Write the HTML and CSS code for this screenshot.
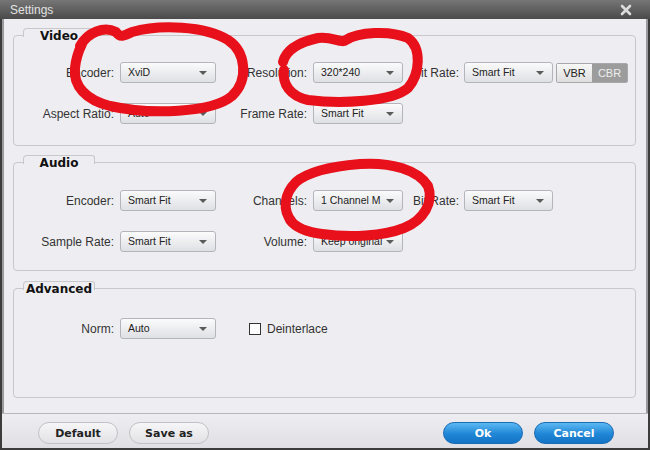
FILE: index.html
```html
<!DOCTYPE html>
<html lang="en">
<head>
  <meta charset="UTF-8" />
  <title>Settings</title>
  <link rel="stylesheet" href="styles.css">
</head>
<body>
  <div class="window">
    <div class="titlebar">
      <span class="title">Settings</span>
      <svg class="close" width="12" height="12" viewBox="0 0 12 12">
        <path d="M2 2 L10 10 M10 2 L2 10" stroke="#dcdcdc" stroke-width="2.6" stroke-linecap="round" />
      </svg>
    </div>

    <div class="content">
      <div class="group video">
        <div class="tab">Video</div>
        <div class="row">
          <label>Encoder:</label>
          <div class="select">XviD</div>
          <label>Resolution:</label>
          <div class="select">320*240</div>
          <label class="short">Bit Rate:</label>
          <div class="select">Smart Fit</div>
          <div class="toggle">
            <span class="on">VBR</span>
            <span class="off">CBR</span>
          </div>
        </div>
        <div class="row">
          <label>Aspect Ratio:</label>
          <div class="select">Auto</div>
          <label>Frame Rate:</label>
          <div class="select">Smart Fit</div>
        </div>
      </div>

      <div class="group audio">
        <div class="tab">Audio</div>
        <div class="row">
          <label>Encoder:</label>
          <div class="select">Smart Fit</div>
          <label>Channels:</label>
          <div class="select">1 Channel M</div>
          <label class="short">Bit Rate:</label>
          <div class="select">Smart Fit</div>
        </div>
        <div class="row">
          <label>Sample Rate:</label>
          <div class="select">Smart Fit</div>
          <label>Volume:</label>
          <div class="select">Keep original</div>
        </div>
      </div>

      <div class="group advanced">
        <div class="tab">Advanced</div>
        <div class="row">
          <label>Norm:</label>
          <div class="select">Auto</div>
          <div class="check">
            <span class="box"></span>
            <span>Deinterlace</span>
          </div>
        </div>
      </div>
    </div>

    <div class="footer">
      <div class="buttons">
        <button class="btn">Default</button>
        <button class="btn">Save as</button>
      </div>
      <div class="buttons">
        <button class="btn blue">Ok</button>
        <button class="btn blue">Cancel</button>
      </div>
    </div>

    <!-- hand drawn marks on top of the dialog -->
    <svg class="marks" width="650" height="450" viewBox="0 0 650 450">
      <g fill="none" stroke="#e8101a" stroke-width="10" stroke-linecap="round" stroke-linejoin="round">
        <path d="M80 46 C 88 32, 104 26, 116 32 C 120 38, 124 36, 132 32 C 160 24, 205 26, 228 40 C 246 52, 249 80, 232 96 C 212 113, 150 115, 110 106 C 86 100, 73 86, 75 68 C 76 58, 78 52, 82 44" />
        <path d="M283 62 C 286 50, 300 42, 318 38 C 332 36, 342 44, 346 40 C 358 32, 390 30, 408 38 C 422 48, 420 74, 408 88 C 392 102, 340 104, 308 100 C 290 96, 282 84, 284 70" />
        <path d="M292 222 C 282 210, 284 194, 296 182 C 310 170, 336 166, 360 164 C 392 162, 418 170, 428 186 C 434 202, 424 220, 404 228 C 384 236, 350 238, 322 234 C 306 232, 296 228, 290 220" />
      </g>
    </svg>
  </div>
</body>
</html>
```

FILE: styles.css
```css
body {
  margin: 0;
  padding: 0;
  background: #ffffff;
  font-family: "Liberation Sans", Arial, sans-serif;
}

.window {
  position: relative;
  width: 650px;
  height: 450px;
  box-sizing: border-box;
  display: flex;
  flex-direction: column;
  background: #eeeef2;
  border-left: 2px solid #3c3c3c;
  border-right: 2px solid #3c3c3c;
  border-bottom: 2px solid #3c3c3c;
  box-shadow: inset 2px 0 0 #9a9a9e, inset -2px 0 0 #9a9a9e;
}

.titlebar {
  height: 19px;
  margin: 0 -2px;
  padding: 0 18px 0 10px;
  display: flex;
  align-items: center;
  justify-content: space-between;
  background: linear-gradient(#767676, #4a4a4a);
}

.title {
  color: #e2e2e2;
  font-size: 12px;
}

.close {
  display: block;
}

.content {
  flex: 1;
  padding: 16px 12px 0 11px;
}

.group {
  position: relative;
  height: 111px;
  box-sizing: border-box;
  border: 1px solid #c8c8cc;
  border-radius: 4px;
  padding-top: 26px;
  display: flex;
  flex-direction: column;
  gap: 20px;
}

.group.audio {
  height: 109px;
  margin-top: 16px;
  padding-top: 27px;
}

.group.advanced {
  height: 110px;
  margin-top: 17px;
  padding-top: 29px;
}

.tab {
  position: absolute;
  top: -8px;
  left: 9px;
  width: 72px;
  height: 9px;
  box-sizing: border-box;
  border: 1px solid #c8c8cc;
  border-bottom: none;
  border-radius: 4px 3px 0 0;
  background: #eeeef2;
  text-align: center;
  font-family: "DejaVu Sans", Verdana, sans-serif;
  font-weight: bold;
  font-size: 12px;
  line-height: 14px;
  color: #111;
}

.row {
  display: grid;
  grid-template-columns: 106px 96px 97px 90px 61px 89px auto;
  align-items: center;
  height: 21px;
}

.row label {
  text-align: right;
  padding-right: 6px;
  font-size: 12px;
  color: #333;
  white-space: nowrap;
}

.row label.short {
  padding-right: 5px;
}

.select {
  position: relative;
  height: 21px;
  box-sizing: border-box;
  padding: 2px 22px 0 7px;
  border: 1px solid #b4b5ba;
  border-radius: 3px;
  background: linear-gradient(#fbfbfc, #dfe0e4);
  font-size: 10.5px;
  line-height: 14px;
  color: #222;
  white-space: nowrap;
  overflow: hidden;
}

.select::after {
  content: "";
  position: absolute;
  right: 8px;
  top: 8px;
  border-left: 4px solid transparent;
  border-right: 4px solid transparent;
  border-top: 4px solid #5a5a5a;
}

.toggle {
  margin-left: 3px;
  width: 72px;
  height: 20px;
  box-sizing: border-box;
  display: flex;
  border: 1px solid #a8a8ac;
  border-radius: 2px;
  font-size: 11px;
}

.toggle span {
  flex: 1;
  display: flex;
  align-items: center;
  justify-content: center;
}

.toggle .on {
  background: linear-gradient(#f8f8f8, #dedede);
  color: #222;
}

.toggle .off {
  background: #9c9c9c;
  color: #eeeeee;
}

.check {
  grid-column: 3 / span 3;
  margin-left: 33px;
  display: flex;
  align-items: center;
  gap: 6px;
  font-size: 12px;
  color: #333;
}

.check .box {
  width: 12px;
  height: 12px;
  box-sizing: border-box;
  border: 1px solid #333;
  background: #fff;
}

.footer {
  height: 35px;
  box-sizing: border-box;
  border-top: 1px solid #b8b8bc;
  padding: 8px 34px 0 36px;
  display: flex;
  justify-content: space-between;
  align-items: flex-start;
  background: linear-gradient(#eeeef2, #e0e0e4);
}

.buttons {
  display: flex;
  gap: 11px;
}

.btn {
  width: 80px;
  height: 22px;
  padding: 0;
  border: 1px solid #c2c2c6;
  border-radius: 11px;
  background: linear-gradient(#f6f6f8, #e2e2e6);
  font-family: "DejaVu Sans", Verdana, sans-serif;
  font-weight: bold;
  font-size: 11px;
  color: #222;
}

.btn.blue {
  border-color: #1a6cb4;
  background: linear-gradient(#5cb8f2, #1f86d6 55%, #1473c4);
  color: #fff;
}

.marks {
  position: absolute;
  top: 0;
  left: -2px;
  pointer-events: none;
}
```
